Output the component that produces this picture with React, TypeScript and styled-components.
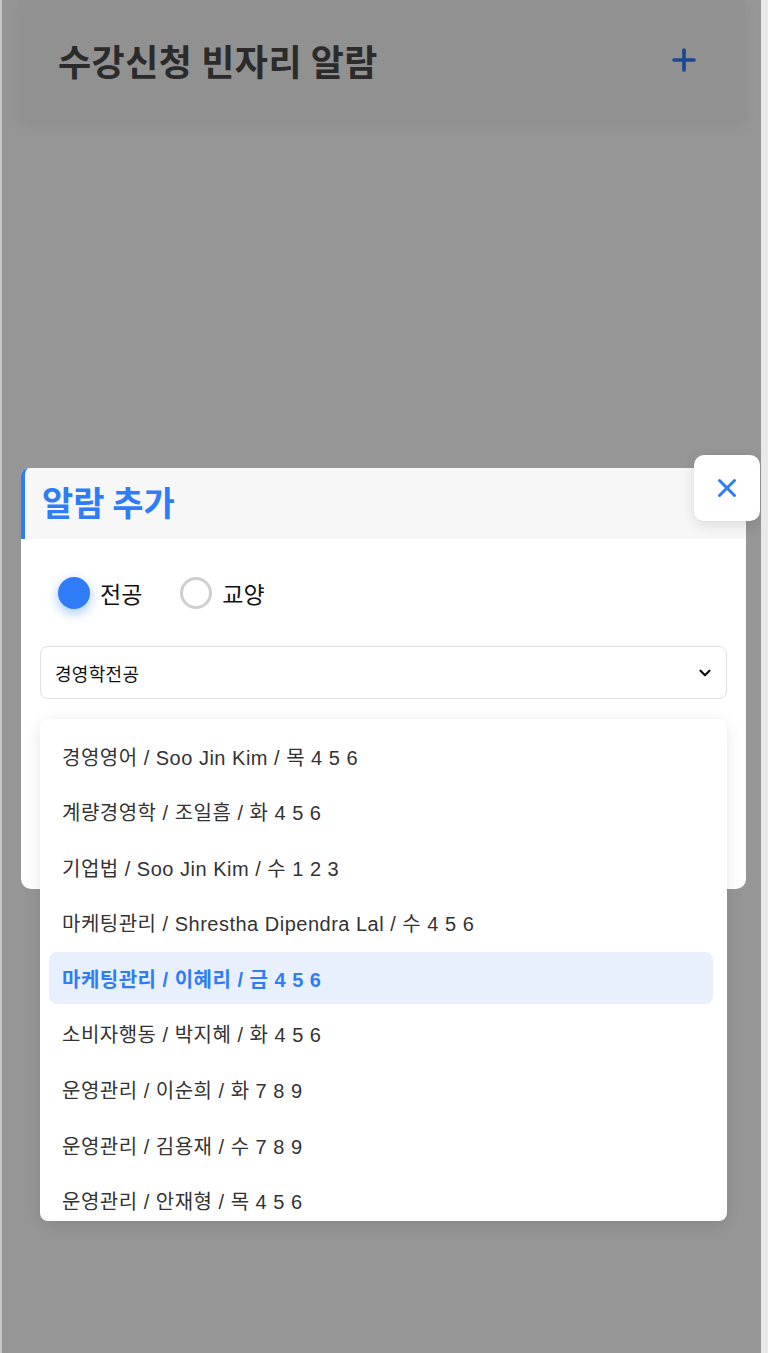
import * as React from "react"
import styled, { createGlobalStyle } from "styled-components"
import { Plus, X, ChevronDown } from "lucide-react"

const GlobalStyle = createGlobalStyle`
  html, body {
    margin: 0;
    padding: 0;
    background: #e9e9e9;
  }
  body {
    font-family: "Liberation Sans", "Noto Sans CJK KR", sans-serif;
  }
  * {
    box-sizing: border-box;
  }
`

const BLUE = "#2f7cf6"

const Frame = styled.div`
  position: relative;
  width: 761px;
  height: 1353px;
  border-left: 2px solid #c6c6c6;
  background: #ffffff;
  overflow: hidden;
`

const Header = styled.header`
  height: 120px;
  margin: 0 16px;
  padding: 0 44px 0 40px;
  display: flex;
  align-items: center;
  justify-content: space-between;
  background: #f7f7f7;
  box-shadow: 0 6px 12px rgba(0, 0, 0, 0.06);
`

const Title = styled.h1`
  margin: 0;
  font-family: "Noto Sans CJK KR", sans-serif;
  font-size: 36px;
  font-weight: 700;
  color: #4a4a4a;
  letter-spacing: 0.5px;
`

const AddButton = styled.button`
  border: none;
  background: none;
  padding: 0;
  color: ${BLUE};
  display: flex;
`

const Overlay = styled.div`
  position: absolute;
  inset: 0;
  background: rgba(0, 0, 0, 0.41);
  display: flex;
  align-items: center;
  justify-content: center;
  padding-top: 4px;
`

const Modal = styled.div`
  position: relative;
  width: 725px;
  margin-left: 4px;
  background: #fff;
  border-radius: 8px 8px 10px 10px;
`

const ModalHeader = styled.div`
  height: 71px;
  display: flex;
  align-items: center;
  padding: 0 0 4px 17px;
  background: #f7f7f7;
  border-left: 4px solid ${BLUE};
  border-radius: 8px 8px 0 0;
`

const ModalTitle = styled.h2`
  margin: 0;
  font-family: "Noto Sans CJK KR", sans-serif;
  font-size: 34px;
  font-weight: 700;
  color: ${BLUE};
`

const CloseButton = styled.button`
  position: absolute;
  top: -13px;
  right: -14px;
  width: 66px;
  height: 66px;
  border: none;
  border-radius: 10px;
  background: #fff;
  color: ${BLUE};
  display: flex;
  align-items: center;
  justify-content: center;
  box-shadow: 0 4px 14px rgba(0, 0, 0, 0.12);
`

const ModalBody = styled.div`
  padding: 37px 19px 190px 19px;
`

const RadioRow = styled.div`
  display: flex;
  align-items: center;
  gap: 38px;
  padding-left: 18px;
  margin-bottom: 36px;
`

const RadioLabel = styled.label`
  display: flex;
  align-items: center;
  gap: 10px;
  font-family: "Noto Sans CJK KR", sans-serif;
  font-size: 23px;
  color: #111;
`

const RadioDot = styled.span<{ $checked?: boolean }>`
  width: 32px;
  height: 32px;
  border-radius: 50%;
  background: ${(p) => (p.$checked ? BLUE : "#fff")};
  border: ${(p) => (p.$checked ? "none" : "3px solid #cfcfcf")};
  box-shadow: ${(p) =>
    p.$checked ? "0 4px 12px rgba(47, 124, 246, 0.45)" : "none"};
`

const SelectWrap = styled.div`
  position: relative;
`

const SelectBox = styled.div`
  height: 53px;
  display: flex;
  align-items: center;
  justify-content: space-between;
  padding: 0 12px 0 14px;
  border: 1.5px solid #e0e0e0;
  border-radius: 8px;
  font-family: "Noto Sans CJK KR", sans-serif;
  font-size: 18px;
  letter-spacing: 0.3px;
  color: #111;
`

const OptionList = styled.ul`
  position: absolute;
  top: 73px;
  left: 0;
  right: 0;
  height: 502px;
  margin: 0;
  padding: 11px 14px 0 9px;
  list-style: none;
  display: flex;
  flex-direction: column;
  gap: 3.6px;
  overflow: hidden;
  background: #fff;
  border-radius: 8px;
  box-shadow: 0 4px 16px rgba(0, 0, 0, 0.1);
`

const Option = styled.li<{ $active?: boolean }>`
  flex: none;
  height: 52px;
  display: flex;
  align-items: center;
  padding-left: 13px;
  border-radius: 8px;
  font-size: 20px;
  letter-spacing: 0.5px;
  color: ${(p) => (p.$active ? BLUE : "#333")};
  font-weight: ${(p) => (p.$active ? 700 : 400)};
  background: ${(p) => (p.$active ? "#e8f0fe" : "transparent")};
`

const options = [
  "경영영어 / Soo Jin Kim / 목 4 5 6",
  "계량경영학 / 조일흠 / 화 4 5 6",
  "기업법 / Soo Jin Kim / 수 1 2 3",
  "마케팅관리 / Shrestha Dipendra Lal / 수 4 5 6",
  "마케팅관리 / 이혜리 / 금 4 5 6",
  "소비자행동 / 박지혜 / 화 4 5 6",
  "운영관리 / 이순희 / 화 7 8 9",
  "운영관리 / 김용재 / 수 7 8 9",
  "운영관리 / 안재형 / 목 4 5 6",
]

const App = () => (
  <Frame>
    <GlobalStyle />
    <Header>
      <Title>수강신청 빈자리 알람</Title>
      <AddButton>
        <Plus size={34} strokeWidth={2.6} />
      </AddButton>
    </Header>
    <Overlay>
      <Modal>
        <ModalHeader>
          <ModalTitle>알람 추가</ModalTitle>
        </ModalHeader>
        <CloseButton>
          <X size={30} strokeWidth={2.4} />
        </CloseButton>
        <ModalBody>
          <RadioRow>
            <RadioLabel>
              <RadioDot $checked />
              전공
            </RadioLabel>
            <RadioLabel>
              <RadioDot />
              교양
            </RadioLabel>
          </RadioRow>
          <SelectWrap>
            <SelectBox>
              경영학전공
              <ChevronDown size={18} strokeWidth={3} color="#111" />
            </SelectBox>
            <OptionList>
              {options.map((o, i) => (
                <Option key={o} $active={i === 4}>
                  {o}
                </Option>
              ))}
            </OptionList>
          </SelectWrap>
        </ModalBody>
      </Modal>
    </Overlay>
  </Frame>
)

export default App
